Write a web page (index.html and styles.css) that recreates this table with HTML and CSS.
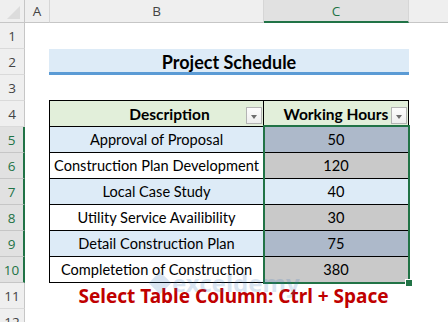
FILE: index.html
```html
<!DOCTYPE html>
<html>
<head>
<meta charset="utf-8">
<link rel="stylesheet" href="styles.css">
</head>
<body>
<div class="sheet">
  <div class="hd corner"><span class="tri"></span></div>
  <div class="hd col">A</div>
  <div class="hd col">B</div>
  <div class="hd col sel">C</div>
  <div class="hd col last"></div>

  <div class="hd row">1</div><div></div><div></div><div></div><div></div>

  <div class="hd row">2</div><div></div>
  <div class="title">Project Schedule</div>
  <div></div>

  <div class="hd row">3</div><div></div><div></div><div></div><div></div>

  <div class="hd row">4</div><div></div>
  <div class="th first desc">Description<span class="filter"></span></div>
  <div class="th">Working Hours<span class="filter"></span></div>
  <div></div>

  <div class="hd row rsel">5</div><div></div>
  <div class="td first blue">Approval of Proposal</div>
  <div class="td s-blue">50</div>
  <div></div>

  <div class="hd row rsel">6</div><div></div>
  <div class="td first">Construction Plan Development</div>
  <div class="td s-gray">120</div>
  <div></div>

  <div class="hd row rsel">7</div><div></div>
  <div class="td first blue">Local Case Study</div>
  <div class="td blue">40</div>
  <div></div>

  <div class="hd row rsel">8</div><div></div>
  <div class="td first">Utility Service Availibility</div>
  <div class="td s-gray">30</div>
  <div></div>

  <div class="hd row rsel">9</div><div></div>
  <div class="td first blue">Detail Construction Plan</div>
  <div class="td s-blue">75</div>
  <div></div>

  <div class="hd row rsel">10</div><div></div>
  <div class="td first lastrow">Completetion of Construction</div>
  <div class="td s-gray lastrow">380</div>
  <div></div>

  <div class="hd row">11</div><div></div>
  <div class="caption">Select Table Column: Ctrl + Space</div>
  <div></div>

  <div class="hd row">12</div><div></div><div></div><div></div><div></div>

  <div class="selection"><span class="handle"></span></div>
  <div class="watermark"><span class="wm-logo"></span><span class="wm-text">exceldemy</span></div>
</div>
</body>
</html>
```
FILE: styles.css
```css
html, body {
  margin: 0;
  padding: 0;
  background: #fff;
}
.sheet {
  position: relative;
  display: grid;
  grid-template-columns: 25px 25px 214px 145px 1fr;
  grid-template-rows: 23px repeat(12, 26px);
  width: 448px;
  height: 322px;
  overflow: hidden;
  font-family: "Lato", "Open Sans", sans-serif;
  color: #000;
}
.hd {
  box-sizing: border-box;
  background: #efefef;
  color: #444;
  font-family: "Open Sans", "Noto Sans", sans-serif;
  font-size: 13.5px;
  display: flex;
  align-items: center;
  justify-content: center;
}
.corner {
  border-right: 1px solid #c6c6c6;
  border-bottom: 1px solid #c6c6c6;
  justify-content: flex-end;
  align-items: flex-end;
  padding: 0 4px 3px 0;
}
.tri {
  width: 0;
  height: 0;
  border-left: 13px solid transparent;
  border-bottom: 13px solid #dcdcdc;
}
.col {
  border-right: 1px solid #d6d6d6;
  border-bottom: 1px solid #c6c6c6;
}
.col.last { border-right: none; }
.col.sel {
  background: #e1e1e1;
  color: #217346;
  border-bottom: 2px solid #217346;
}
.row {
  border-right: 1px solid #c6c6c6;
  border-bottom: 1px solid #dadada;
}
.row.rsel {
  background: #e1e1e1;
  color: #217346;
  border-right: 2px solid #217346;
  border-bottom-color: #c6c6c6;
}
.title {
  grid-column: span 2;
  box-sizing: border-box;
  margin-left: -1px;
  background: #ddebf7;
  border-bottom: 3px solid #5b9bd5;
  display: flex;
  align-items: center;
  justify-content: center;
  font-weight: 700;
  font-size: 18px;
  padding-top: 2px;
}
.th, .td {
  box-sizing: border-box;
  border-right: 1px solid #000;
  border-bottom: 1px solid #000;
  display: flex;
  align-items: center;
  justify-content: center;
  font-size: 14.6px;
  position: relative;
}
.th {
  margin-top: -1px;
  border-top: 1px solid #000;
  background: #e2efda;
  font-weight: 700;
  font-size: 15.5px;
}
.th.desc {
  padding-left: 26px;
}
.first {
  margin-left: -1px;
  border-left: 1px solid #000;
}
.blue { background: #ddebf7; }
.s-blue { background: #adb9ca; }
.s-gray { background: #c9c9c9; }
.filter {
  position: absolute;
  right: 1px;
  top: 6px;
  width: 16px;
  height: 17px;
  box-sizing: border-box;
  border: 1px solid #b4b4b4;
  background: linear-gradient(#fdfdfd, #eeeeee);
}
.filter::after {
  content: "";
  position: absolute;
  left: 4px;
  top: 7px;
  border-left: 3px solid transparent;
  border-right: 3px solid transparent;
  border-top: 4px solid #6d6d6d;
}
.caption {
  grid-column: span 2;
  display: flex;
  align-items: center;
  justify-content: center;
  padding-left: 8px;
  color: #c00000;
  font-family: "Noto Sans", sans-serif;
  font-weight: 700;
  font-size: 19px;
}
.selection {
  position: absolute;
  grid-column: 4 / 5;
  grid-row: 6 / 12;
  top: -2px;
  left: -1px;
  right: -1px;
  bottom: -1px;
  border: 2px solid #217346;
  pointer-events: none;
  z-index: 2;
}
.handle {
  position: absolute;
  right: -5px;
  bottom: -5px;
  width: 6px;
  height: 6px;
  background: #217346;
  border: 1px solid #fff;
}
.watermark {
  position: absolute;
  left: 152px;
  top: 266px;
  display: flex;
  align-items: center;
  gap: 4px;
  opacity: 0.18;
  pointer-events: none;
  z-index: 3;
}
.wm-logo {
  width: 16px;
  height: 16px;
  background: #2f6fb8;
  transform: rotate(45deg);
}
.wm-text {
  font-family: "Noto Sans", sans-serif;
  font-weight: 700;
  font-size: 24px;
  color: #2f6fb8;
}
```
